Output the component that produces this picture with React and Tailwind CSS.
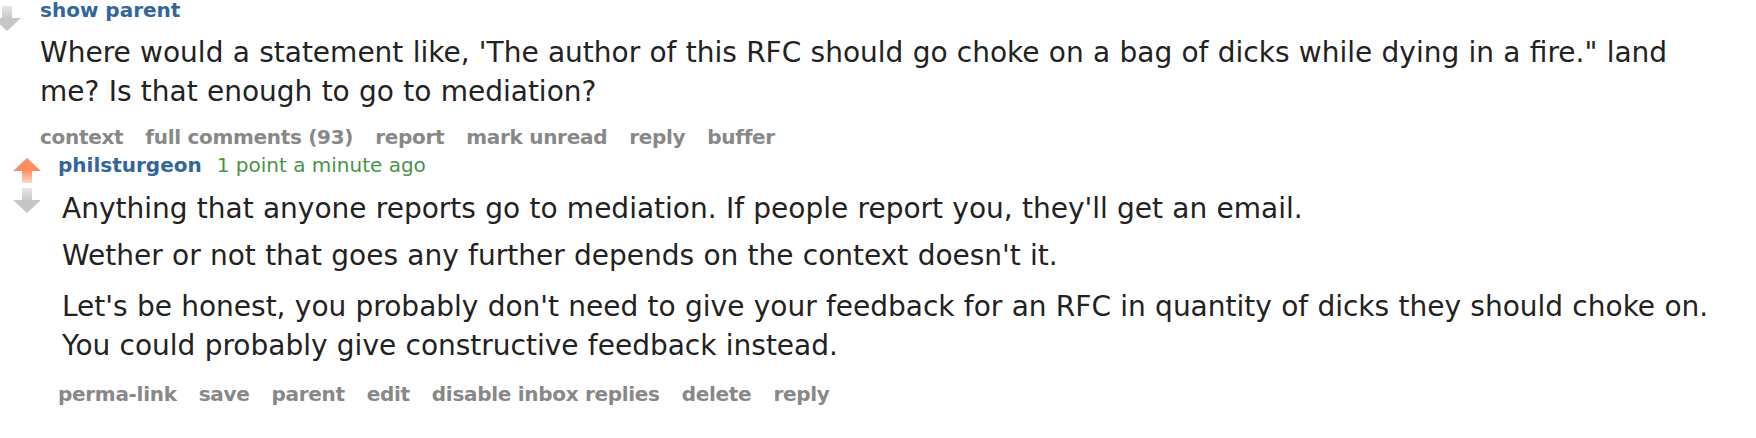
import React from 'react';

const UpArrow = () => (
    <svg width="30" height="26" viewBox="0 0 30 26">
        <defs>
            <linearGradient id="upStem" x1="0" y1="0" x2="0" y2="1">
                <stop offset="0" stopColor="#ff8b60" />
                <stop offset="1" stopColor="#ffd9cb" />
            </linearGradient>
        </defs>
        <polygon points="1,14 15,1 29,14" fill="#ff8b60" />
        <rect x="10" y="13" width="10" height="13" fill="url(#upStem)" />
    </svg>
);

const DownArrow = () => (
    <svg width="30" height="26" viewBox="0 0 30 26">
        <defs>
            <linearGradient id="downStem" x1="0" y1="0" x2="0" y2="1">
                <stop offset="0" stopColor="#e8e8e8" />
                <stop offset="1" stopColor="#c6c6c6" />
            </linearGradient>
        </defs>
        <rect x="10" y="0" width="10" height="13" fill="url(#downStem)" />
        <polygon points="1,12 29,12 15,25" fill="#c6c6c6" />
    </svg>
);

const Actions = ({ items, className = '' }) => (
    <ul className={`flex gap-[22px] text-[20px] leading-6 tracking-[-0.3px] font-bold text-[#888] ${className}`}>
        {items.map((item) => (
            <li key={item}>
                <a href="#" className="hover:underline">{item}</a>
            </li>
        ))}
    </ul>
);

const App = () => {
    return (
        <div className="w-[1756px] h-[438px] overflow-hidden bg-white text-[#222] font-['DejaVu_Sans',Verdana,sans-serif]">
            {/* Parent comment */}
            <div className="flex -ml-[8px]">
                <div className="w-[30px] flex-shrink-0 pt-[6px]">
                    <DownArrow />
                </div>
                <div className="ml-[18px] flex-grow pr-[36px]">
                    <a href="#" className="block -mt-[2px] text-[20px] leading-6 font-bold text-[#336699]">show parent</a>
                    <div className="mt-[11px] text-[28px] leading-[39px] [word-spacing:0.4px]">
                        <p>Where would a statement like, 'The author of this RFC should go choke on a bag of dicks while dying in a fire." land me? Is that enough to go to mediation?</p>
                    </div>
                    <Actions
                        className="mt-[14px]"
                        items={['context', 'full comments (93)', 'report', 'mark unread', 'reply', 'buffer']}
                    />
                </div>
            </div>

            {/* Reply */}
            <div className="flex ml-[12px] mt-[4px]">
                <div className="w-[30px] flex-shrink-0 pt-[4px] flex flex-col gap-[5px]">
                    <UpArrow />
                    <DownArrow />
                </div>
                <div className="ml-[16px] flex-grow pr-[36px]">
                    <div className="text-[20px] leading-6">
                        <a href="#" className="font-bold text-[#336699]">philsturgeon</a>
                        <span className="ml-[15px] text-[#4a934a]">1 point a minute ago</span>
                    </div>
                    <div className="mt-[12px] pl-[4px] text-[28px] leading-[39px] [word-spacing:0.4px]">
                        <p>Anything that anyone reports go to mediation. If people report you, they'll get an email.</p>
                        <p className="mt-[8px]">Wether or not that goes any further depends on the context doesn't it.</p>
                        <p className="mt-[12px]">Let's be honest, you probably don't need to give your feedback for an RFC in quantity of dicks they should choke on. You could probably give constructive feedback instead.</p>
                    </div>
                    <Actions
                        className="mt-[17px]"
                        items={['perma-link', 'save', 'parent', 'edit', 'disable inbox replies', 'delete', 'reply']}
                    />
                </div>
            </div>
        </div>
    );
};

export default App;
